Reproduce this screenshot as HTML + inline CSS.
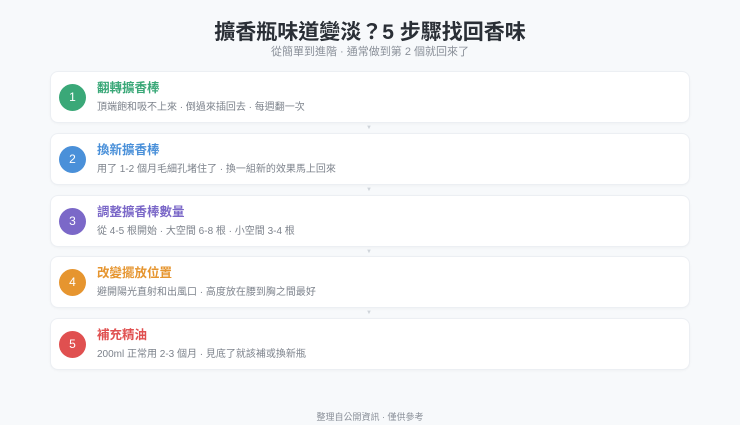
<!DOCTYPE html>
<html><head><meta charset="utf-8"><style>
*{margin:0;padding:0;box-sizing:border-box}
body{width:740px;height:425px;background:#f7f9fb;font-family:"Liberation Sans","Noto Sans CJK TC",sans-serif;position:relative;overflow:hidden}
h1{position:absolute;top:16px;left:0;width:740px;text-align:center;font-size:21px;font-weight:700;color:#2a2f36;letter-spacing:0}
.sub{position:absolute;top:43px;left:0;width:740px;text-align:center;font-size:11px;color:#8a9099}
.card{position:absolute;left:50px;width:640px;height:52px;background:#fff;border:1px solid #eceff3;border-radius:8px;box-shadow:0 1px 2px rgba(0,0,0,.03)}
.c{position:absolute;left:8px;top:12px;width:27px;height:27px;border-radius:50%;color:#fff;font-size:12px;text-align:center;line-height:27px}
.t{position:absolute;left:46px;top:5px;font-size:12.5px;font-weight:600}
.d{position:absolute;left:46px;top:26px;font-size:10px;color:#7d838c}
.ar{position:absolute;left:366px;font-size:6px;color:#cfd4da}
.foot{position:absolute;top:410px;left:0;width:740px;text-align:center;font-size:9px;color:#8a9099}
</style></head><body>
<h1>擴香瓶味道變淡？5 步驟找回香味</h1>
<div class="sub">從簡單到進階 · 通常做到第 2 個就回來了</div>

<div class="card" style="top:71px"><div class="c" style="background:#3aa878">1</div><div class="t" style="color:#3aa878">翻轉擴香棒</div><div class="d">頂端飽和吸不上來 · 倒過來插回去 · 每週翻一次</div></div>
<div class="ar" style="top:125px">▼</div>
<div class="card" style="top:133px"><div class="c" style="background:#4a90d9">2</div><div class="t" style="color:#4a90d9">換新擴香棒</div><div class="d">用了 1-2 個月毛細孔堵住了 · 換一組新的效果馬上回來</div></div>
<div class="ar" style="top:187px">▼</div>
<div class="card" style="top:195px"><div class="c" style="background:#7b68c8">3</div><div class="t" style="color:#7b68c8">調整擴香棒數量</div><div class="d">從 4-5 根開始 · 大空間 6-8 根 · 小空間 3-4 根</div></div>
<div class="ar" style="top:249px">▼</div>
<div class="card" style="top:256px"><div class="c" style="background:#e6952f">4</div><div class="t" style="color:#e6952f">改變擺放位置</div><div class="d">避開陽光直射和出風口 · 高度放在腰到胸之間最好</div></div>
<div class="ar" style="top:310px">▼</div>
<div class="card" style="top:318px"><div class="c" style="background:#e05050">5</div><div class="t" style="color:#e05050">補充精油</div><div class="d">200ml 正常用 2-3 個月 · 見底了就該補或換新瓶</div></div>

<div class="foot">整理自公開資訊 · 僅供參考</div>
</body></html>
